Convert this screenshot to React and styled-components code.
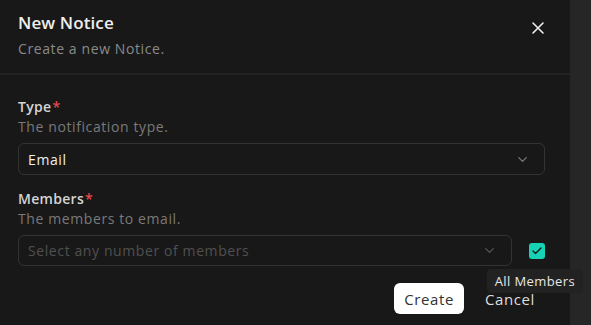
import React from "react";
import styled, { createGlobalStyle } from "styled-components";

const Global = createGlobalStyle`
  html, body { margin: 0; padding: 0; background: #262626; }
  body { font-family: "Open Sans", "Noto Sans", sans-serif; }
  * { box-sizing: border-box; }
`;

const Page = styled.div`
  width: 591px;
  height: 325px;
  display: flex;
  background: #262626;
  overflow: hidden;
`;

const Dialog = styled.div`
  width: 570px;
  height: 325px;
  background: #181818;
  display: flex;
  flex-direction: column;
`;

const Header = styled.div`
  display: flex;
  justify-content: space-between;
  align-items: flex-start;
  padding: 11px 18px 0 18px;
  height: 75px;
  border-bottom: 2px solid #222222;
`;

const HeaderText = styled.div`
  display: flex;
  flex-direction: column;
`;

const Title = styled.div`
  color: #eeeeee;
  font-size: 17px;
  font-weight: 600;
  line-height: 24px;
  letter-spacing: 0.1px;
`;

const Subtitle = styled.div`
  color: #8a8a8a;
  font-size: 14px;
  line-height: 20px;
  margin-top: 4px;
  letter-spacing: 0.6px;
`;

const CloseButton = styled.button`
  background: none;
  border: none;
  padding: 0;
  margin: 10px 7px 0 0;
  width: 14px;
  height: 14px;
  display: flex;
  cursor: pointer;
`;

const Body = styled.div`
  display: flex;
  flex-direction: column;
  padding: 22px 25px 0 18px;
  gap: 14px;
`;

const Field = styled.div`
  display: flex;
  flex-direction: column;
`;

const Label = styled.div`
  color: #d4d4d4;
  font-size: 14px;
  font-weight: 600;
  line-height: 20px;
  letter-spacing: 0.3px;
`;

const Required = styled.span`
  color: #e5484d;
  margin-left: 1px;
`;

const Description = styled.div`
  color: #7a7a7a;
  font-size: 14px;
  line-height: 20px;
  margin-bottom: 6px;
  letter-spacing: 0.6px;
`;

const Row = styled.div`
  display: flex;
  align-items: center;
  gap: 17px;
  position: relative;
`;

const Select = styled.div`
  flex: 1;
  height: ${(p) => p.$h}px;
  border: 1px solid #333333;
  border-radius: 6px;
  display: flex;
  align-items: center;
  justify-content: space-between;
  padding: 0 14px 0 9px;
  color: ${(p) => (p.$placeholder ? "#505050" : "#f0f0f0")};
  font-size: 14px;
  font-weight: ${(p) => (p.$placeholder ? 400 : 500)};
  letter-spacing: 0.6px;
`;

const Checkbox = styled.div`
  width: 16px;
  height: 16px;
  border-radius: 3px;
  background: #17d3b5;
  display: flex;
  align-items: center;
  justify-content: center;
  margin-left: 0;
  flex-shrink: 0;
`;

const Tooltip = styled.div`
  position: absolute;
  right: -38px;
  top: 34px;
  background: #222222;
  color: #e6e6e6;
  font-size: 13px;
  line-height: 16px;
  padding: 4px 8px;
  border-radius: 4px;
  z-index: 2;
  white-space: nowrap;
  letter-spacing: 0.4px;
`;

const Footer = styled.div`
  display: flex;
  justify-content: flex-end;
  align-items: center;
  gap: 21px;
  padding: 17px 35px 0 0;
`;

const PrimaryButton = styled.button`
  height: 31px;
  padding: 0 10px;
  background: #ffffff;
  color: #333333;
  border: none;
  border-radius: 6px;
  font-family: inherit;
  font-size: 15px;
  letter-spacing: 0.6px;
`;

const TextButton = styled.button`
  background: none;
  border: none;
  padding: 0;
  color: #dddddd;
  font-family: inherit;
  font-size: 15px;
  letter-spacing: 0.6px;
`;

const Chevron = ({ color }) => (
  <svg width="15" height="15" viewBox="0 0 24 24" fill="none" stroke={color} strokeWidth="2" strokeLinecap="round" strokeLinejoin="round">
    <path d="m6 9 6 6 6-6" />
  </svg>
);

export default function App() {
  return (
    <>
      <Global />
      <Page>
        <Dialog>
          <Header>
            <HeaderText>
              <Title>New Notice</Title>
              <Subtitle>Create a new Notice.</Subtitle>
            </HeaderText>
            <CloseButton aria-label="Close">
              <svg width="14" height="14" viewBox="0 0 14 14" fill="none" stroke="#eeeeee" strokeWidth="1.6" strokeLinecap="round">
                <path d="M2 2l10 10M12 2L2 12" />
              </svg>
            </CloseButton>
          </Header>
          <Body>
            <Field>
              <Label>Type<Required>*</Required></Label>
              <Description>The notification type.</Description>
              <Row>
                <Select $h={32}>
                  <span>Email</span>
                  <Chevron color="#7a7a7a" />
                </Select>
              </Row>
            </Field>
            <Field>
              <Label>Members<Required>*</Required></Label>
              <Description>The members to email.</Description>
              <Row>
                <Select $h={31} $placeholder>
                  <span>Select any number of members</span>
                  <Chevron color="#555555" />
                </Select>
                <Checkbox>
                  <svg width="12" height="12" viewBox="0 0 24 24" fill="none" stroke="#111" strokeWidth="2.5" strokeLinecap="round" strokeLinejoin="round">
                    <path d="M20 6 9 17l-5-5" />
                  </svg>
                </Checkbox>
                <Tooltip>All Members</Tooltip>
              </Row>
            </Field>
          </Body>
          <Footer>
            <PrimaryButton>Create</PrimaryButton>
            <TextButton>Cancel</TextButton>
          </Footer>
        </Dialog>
      </Page>
    </>
  );
}
